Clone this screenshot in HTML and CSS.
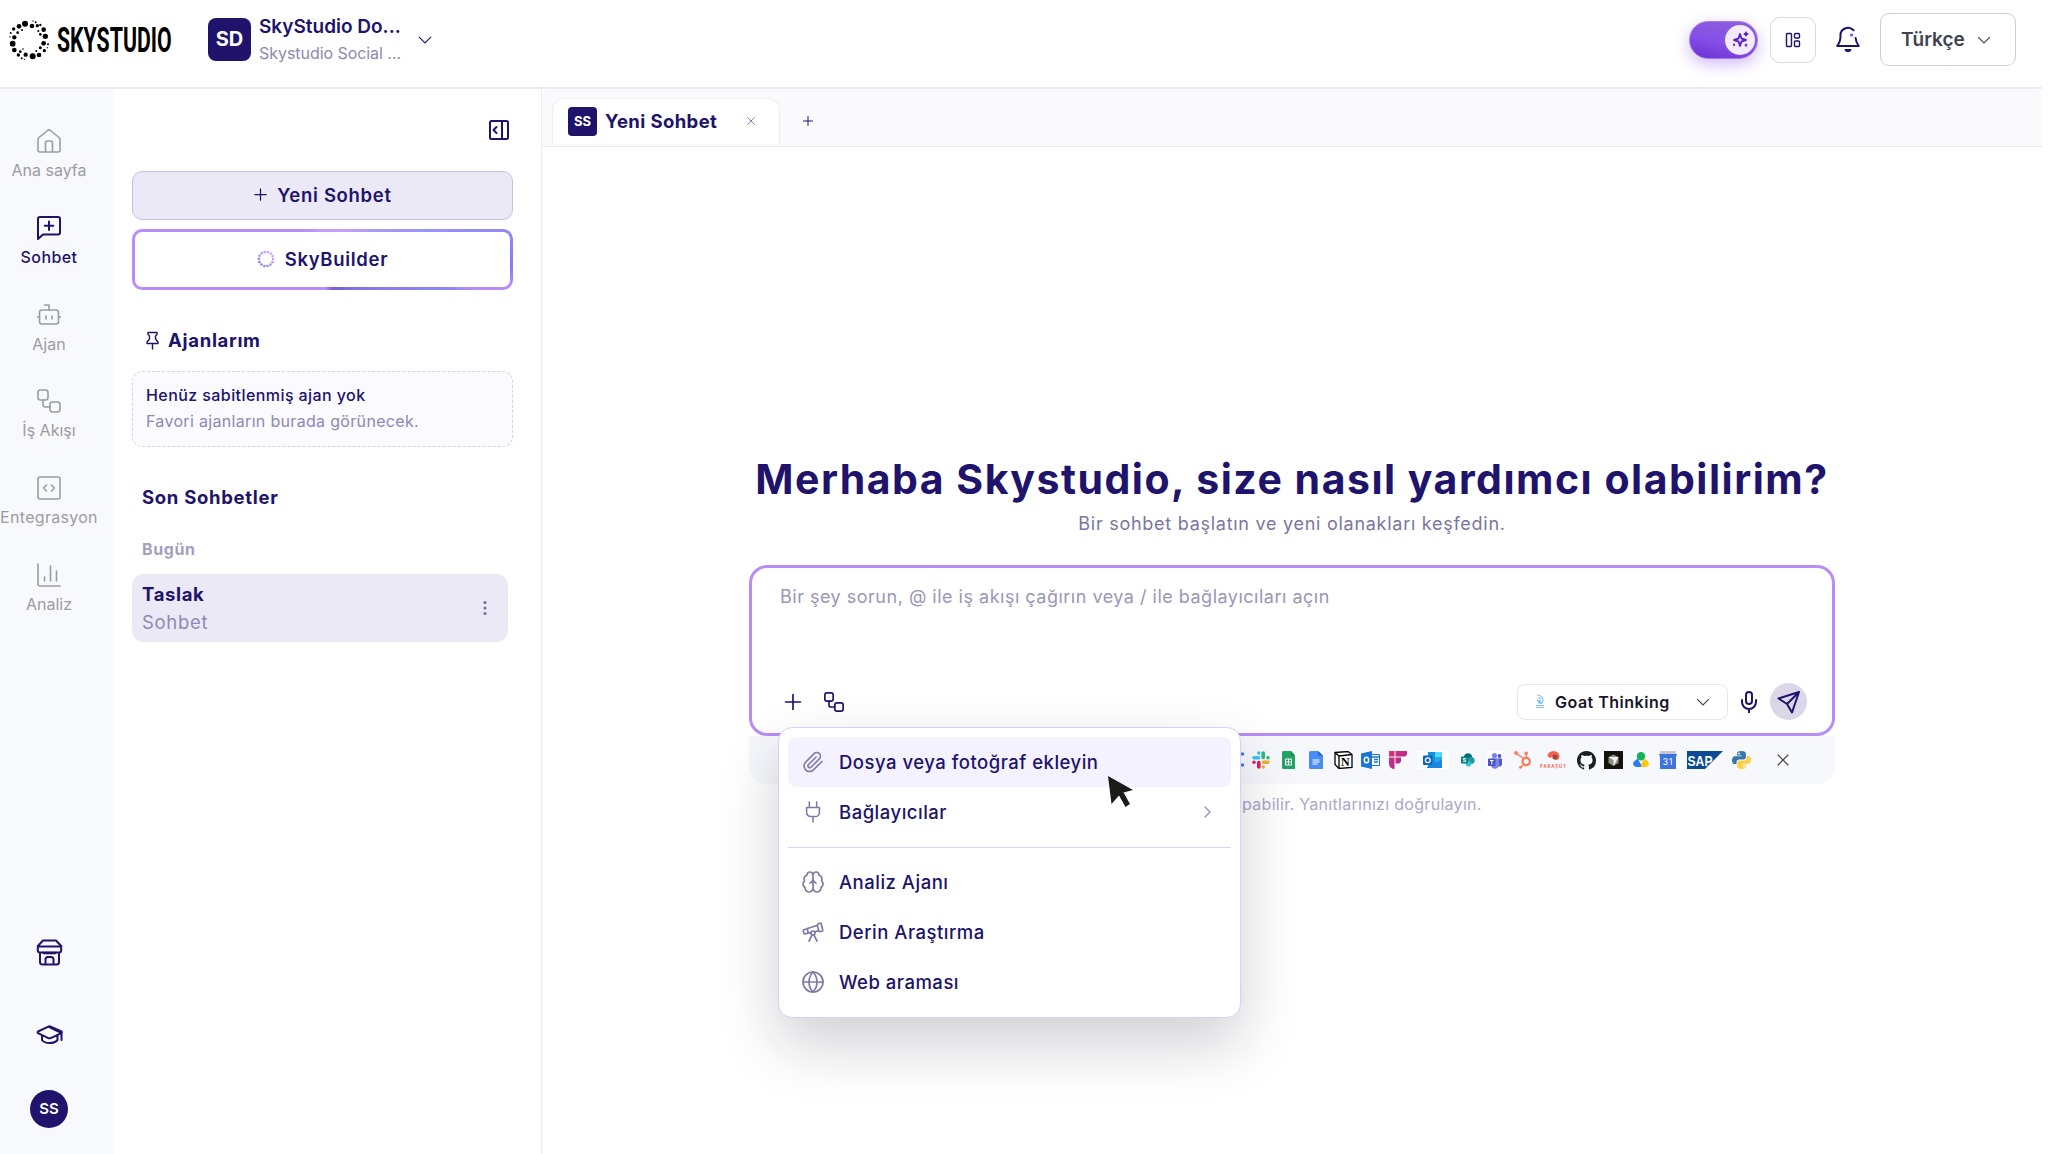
FILE: index.html
```html
<!DOCTYPE html>
<html lang="tr">
<head>
  <meta charset="UTF-8">
  <title>SkyStudio</title>
  <meta name="viewport" content="width=device-width, initial-scale=1.0">
  <link rel="stylesheet" href="styles.css">
</head>
<body>

  <!-- shared icons -->
  <svg class="sprite" width="0" height="0">
    <symbol id="i-plus" viewBox="0 0 24 24"><path d="M12 3v18M3 12h18"/></symbol>
    <symbol id="i-close" viewBox="0 0 24 24"><path d="M3 3l18 18M21 3L3 21"/></symbol>
    <symbol id="i-down" viewBox="0 0 24 24"><path d="M2 7l10 10L22 7"/></symbol>
    <symbol id="i-flow" viewBox="0 0 24 24"><rect x="1" y="1" width="10" height="10" rx="2.5"/><rect x="13" y="13" width="10" height="10" rx="2.5"/><path d="M6 11v4.500a2.500 2.500 0 0 0 2.500 2.500H13"/></symbol>
  </svg>

  <header class="topbar">
    <div class="logo">
      <svg width="42" height="42" viewBox="24 24 126 126">
        <circle cx="75" cy="38" r="9"/><circle cx="96" cy="45" r="7"/><circle cx="57" cy="46" r="7"/>
        <circle cx="41" cy="54" r="5"/><circle cx="112" cy="44" r="5"/><circle cx="121" cy="42" r="3.5"/>
        <circle cx="107" cy="34" r="3"/><circle cx="99" cy="30" r="2"/><circle cx="131" cy="56" r="7"/>
        <circle cx="136" cy="76" r="8"/><circle cx="121" cy="70" r="4"/><circle cx="115" cy="60" r="3"/>
        <circle cx="32" cy="66" r="3"/><circle cx="43" cy="79" r="6.500"/><circle cx="53" cy="65" r="4"/>
        <circle cx="30" cy="78" r="2"/><circle cx="66" cy="57" r="3"/><circle cx="38" cy="98" r="8.500"/>
        <circle cx="43" cy="117" r="7"/><circle cx="55" cy="132" r="5"/><circle cx="61" cy="122" r="4"/>
        <circle cx="69" cy="114" r="2.500"/><circle cx="77" cy="131" r="6.500"/><circle cx="98" cy="136" r="9"/>
        <circle cx="117" cy="132" r="7"/><circle cx="133" cy="119" r="5"/><circle cx="131" cy="97" r="7"/>
        <circle cx="121" cy="110" r="4.500"/><circle cx="144" cy="100" r="3"/><circle cx="142" cy="110" r="2"/>
        <circle cx="65" cy="142" r="3"/><circle cx="73" cy="145" r="2"/><circle cx="109" cy="120" r="3"/>
      </svg>
      <svg class="wordmark" width="116" height="30" viewBox="0 0 116 30">
        <text x="0" y="27" transform="scale(.6 1)" textLength="191" lengthAdjust="spacingAndGlyphs">SKYSTUDIO</text>
      </svg>
    </div>

    <div class="workspace">
      <div class="badge">SD</div>
      <div class="workspace-text">
        <div class="workspace-name">SkyStudio Do...</div>
        <div class="workspace-sub">Skystudio Social ...</div>
      </div>
      <svg class="icon" width="14" height="14"><use href="#i-down"/></svg>
    </div>

    <div class="actions">
      <div class="toggle">
        <div class="knob">
          <svg width="18" height="18" viewBox="0 0 24 24" fill="none" stroke="#5b21c9" stroke-width="2.500" stroke-linejoin="round" stroke-linecap="round"><path d="M12 4l2 6 6 2-6 2-2 6-2-6-6-2 6-2zM20 2v4M18 4h4M4 18v1"/><circle cx="20" cy="19" r=".6"/></svg>
        </div>
      </div>
      <button class="square">
        <svg class="icon" width="16" height="16" viewBox="0 0 16 16"><rect x="1.500" y="1.500" width="5" height="13" rx="1"/><rect x="9.500" y="1.500" width="5" height="4.500" rx="1"/><rect x="9.500" y="9" width="5" height="5.500" rx="1"/></svg>
      </button>
      <svg class="bell" width="24" height="28" viewBox="0 0 24 28"><path d="M17.500 4.300A7.500 7.500 0 0 0 4.500 10c0 5-1 7-3.300 10h21.600c-2-2.600-3-5-3.200-8" /><path d="M9.500 24a3 3 0 0 0 5 0z" fill="#20136b"/><circle cx="15.500" cy="9" r="1.600" fill="#7c4df0" stroke="none"/></svg>
      <button class="lang">Türkçe <svg width="14" height="14"><use href="#i-down"/></svg></button>
    </div>
  </header>

  <div class="app">
    <nav class="rail">
      <a class="rail-item">
        <svg width="24" height="24" viewBox="0 0 24 24"><path d="M1 10.500a3 3 0 0 1 1-2L10.500 1.500a2.300 2.300 0 0 1 3 0L22 8.500a3 3 0 0 1 1 2V21a2 2 0 0 1-2 2H3a2 2 0 0 1-2-2zM8.500 23v-9a2 2 0 0 1 2-2h3a2 2 0 0 1 2 2v9"/></svg>
        <span>Ana sayfa</span>
      </a>
      <a class="rail-item active">
        <svg width="24" height="24" viewBox="0 0 24 24"><path d="M1 23V3a2 2 0 0 1 2-2h18a2 2 0 0 1 2 2v13.500a2 2 0 0 1-2 2H6zM12 5.500v8.500M7.700 9.800h8.600"/></svg>
        <span>Sohbet</span>
      </a>
      <a class="rail-item">
        <svg width="24" height="24" viewBox="0 0 24 24"><rect x="2.500" y="7" width="19" height="14" rx="2.500"/><path d="M12 7V2H7.500M0 14h2.500M21.500 14H24M9 13v3M15 13v3"/></svg>
        <span>Ajan</span>
      </a>
      <a class="rail-item">
        <svg width="24" height="24"><use href="#i-flow"/></svg>
        <span>İş Akışı</span>
      </a>
      <a class="rail-item wide">
        <svg width="24" height="24" viewBox="0 0 24 24"><rect x="1" y="1" width="22" height="22" rx="2"/><path d="M9.500 9l-3 3 3 3M14.500 9l3 3-3 3"/></svg>
        <span>Entegrasyon</span>
      </a>
      <a class="rail-item">
        <svg width="24" height="24" viewBox="0 0 24 24"><path d="M1 1v20a2 2 0 0 0 2 2h20M7.500 14v4M13.500 3v15M19.500 8v10"/></svg>
        <span>Analiz</span>
      </a>

      <div class="rail-bottom">
        <svg width="27" height="27" viewBox="0 0 27 27"><path d="M7 1.500h13l5.200 5.500v4q0 2.500-2.200 2.500H4Q1.800 13.500 1.800 11V7zM2 7.500h23M4 13.500V23a2.500 2.500 0 0 0 2.500 2.500h14A2.500 2.500 0 0 0 23 23v-9.500M9.500 25v-4.500a2.500 2.500 0 0 1 2.500-2.500h3a2.500 2.500 0 0 1 2.500 2.500V25"/><path d="M7 13.500q1.500 2 3 0 1.700 2 3.500 0 1.700 2 3.500 0 1.500 2 3 0"/></svg>
        <svg width="27" height="20" viewBox="0 0 27 20"><path d="M12.300 1.600L2 6.500a1 1 0 0 0 0 1.600l10.300 5a3 3 0 0 0 2.400 0l10.800-5V15M25.500 8.100a1 1 0 0 0 0-1.600L14.700 1.600a3 3 0 0 0-2.400 0zM6 10.500V15c3 4 12 4 15.500 0v-4.500"/></svg>
        <div class="avatar">SS</div>
      </div>
    </nav>

    <aside class="sidebar">
      <svg class="icon collapse" width="20" height="20" viewBox="0 0 20 20"><rect x="1" y="1" width="18" height="18" rx="1.500"/><path d="M13 1v18M7.500 7l-3 3 3 3"/></svg>

      <button class="new-chat"><svg class="icon" width="15" height="15"><use href="#i-plus"/></svg>Yeni Sohbet</button>
      <button class="builder">
        <svg width="18" height="18" viewBox="0 0 18 18" fill="none" stroke-linecap="round">
          <defs><linearGradient id="ring" x1="1" y1="0" x2="0" y2="1"><stop offset="0" stop-color="#dcaaf8"/><stop offset="1" stop-color="#7a7cf0"/></linearGradient></defs>
          <circle cx="9" cy="9" r="7.200" stroke="url(#ring)" stroke-width="2.600" stroke-dasharray="0 3.230"/>
        </svg>
        SkyBuilder
      </button>

      <h2 class="pinned-title">
        <svg class="icon" width="13" height="19" viewBox="0 0 13 19"><path d="M2 1.500h9v2L9.500 5v3l2.500 3v1.500H1V11l2.500-3V5L2 3.500zM6.500 12.500v5.500"/></svg>
        Ajanlarım
      </h2>
      <div class="empty">
        <div class="empty-title">Henüz sabitlenmiş ajan yok</div>
        <div class="empty-text">Favori ajanların burada görünecek.</div>
      </div>

      <h2 class="recent-title">Son Sohbetler</h2>
      <div class="day">Bugün</div>
      <div class="chat-row">
        <div>
          <div class="chat-name">Taslak</div>
          <div class="chat-kind">Sohbet</div>
        </div>
        <svg width="4" height="16" viewBox="0 0 4 16" fill="#6f6a98"><circle cx="2" cy="2.500" r="1.500"/><circle cx="2" cy="8" r="1.500"/><circle cx="2" cy="13.500" r="1.500"/></svg>
      </div>
    </aside>

    <main class="main">
      <div class="tabs">
        <div class="tab">
          <div class="tab-badge">SS</div>
          <span class="tab-name">Yeni Sohbet</span>
          <svg width="10" height="10"><use href="#i-close"/></svg>
        </div>
        <svg class="icon" width="12" height="12"><use href="#i-plus"/></svg>
      </div>

      <section class="hero">
        <h1>Merhaba Skystudio, size nasıl yardımcı olabilirim?</h1>
        <p class="lead">Bir sohbet başlatın ve yeni olanakları keşfedin.</p>

        <div class="composer-wrap">
          <div class="composer">
            <div class="placeholder">Bir şey sorun, @ ile iş akışı çağırın veya / ile bağlayıcıları açın</div>
            <div class="tools">
              <svg class="icon" width="20" height="20"><use href="#i-plus"/></svg>
              <svg class="icon flow" width="20" height="20"><use href="#i-flow"/></svg>
              <div class="model">
                <svg width="10" height="15" viewBox="0 0 10 15" fill="none" stroke="#7fc0ec" stroke-width="1.200"><path d="M2 1c3 0 6 2 6 5s-2 4-4 3 0-3 2-2M3 3.500l3 1.500M2 6l3 2M3 8.500h5M1 11.500h8M1 13.500h8" /></svg>
                <span>Goat Thinking</span>
                <svg class="model-arrow" width="14" height="14"><use href="#i-down"/></svg>
              </div>
              <svg class="icon mic" width="16" height="22" viewBox="0 0 16 22"><rect x="5" y="1" width="6" height="12" rx="3"/><path d="M1 9v2a7 7 0 0 0 14 0V9M8 18v3.500"/></svg>
              <div class="send">
                <svg class="icon" width="24" height="24" viewBox="0 0 24 24"><path d="M22 2L1.500 8.500l8.500 5.500 5 8.500zM22 2L10 14"/></svg>
              </div>
            </div>
          </div>

          <div class="connectors">
            <svg class="cut" width="6" height="18" viewBox="0 0 6 18" fill="#3b7df0"><circle cx="2.500" cy="3" r="1.800"/><circle cx="2.500" cy="14" r="1.800"/></svg>
            <svg class="slack" width="18" height="18" viewBox="0 0 18 18" stroke-width="3.600" stroke-linecap="round"><path d="M2 6.800h4.500M6.800 2v0" stroke="#36c5f0"/><path d="M11.200 2v4.500M16 6.800h0" stroke="#2eb67d"/><path d="M11.500 11.200H16M11.200 16v0" stroke="#ecb22e"/><path d="M6.800 11.500V16M2 11.200h0" stroke="#e01e5a"/></svg>
            <svg class="sheets" width="14" height="18" viewBox="0 0 14 18"><path d="M1.500 0H9l4 4.500V18H1.500Q0 18 0 16.500v-15Q0 0 1.500 0z" fill="#22a464"/><path d="M9 0l4 4.500H9z" fill="#168a50"/><path d="M3.500 8h6v6h-6zM3.500 11h6M6.500 8v6" fill="none" stroke="#fff"/></svg>
            <svg class="docs" width="14" height="18" viewBox="0 0 14 18"><path d="M1.500 0H9l5 4.500V18H1.500Q0 18 0 16.500v-15Q0 0 1.500 0z" fill="#4a8cf5"/><path d="M9 0l5 4.500H9z" fill="#2b67cd"/><path d="M3.500 9h7M3.500 11h7M3.500 13h5" stroke="#fff"/></svg>
            <svg class="notion" width="19" height="18" viewBox="0 0 19 18"><path d="M1 1.500L14 .5l4 3V16.500l-13 1-4-4z" fill="#fff" stroke="#000" stroke-width="1.300"/><path d="M1 1.500l4 3.500 13-1.500M5 5v12.500" fill="none" stroke="#000" stroke-width="1.300"/><text x="7" y="15.200" font-family="Liberation Serif" font-weight="700" font-size="12">N</text></svg>
            <svg class="outlook" width="19" height="18" viewBox="0 0 19 18"><path d="M10 3.500h8.500v11H10z" fill="#fff" stroke="#1976d2"/><path d="M10 6h8M13 8.500h4M13 11h4" stroke="#1976d2" stroke-width="1.500"/><path d="M0 2.500L11 0v18L0 15.500z" fill="#1976d2"/><ellipse cx="5.500" cy="9" rx="2.200" ry="2.800" fill="none" stroke="#fff" stroke-width="1.500"/></svg>
            <svg class="fire" width="18" height="18" viewBox="0 0 18 18"><defs><linearGradient id="ff" x1="0" y1="0" x2="1" y2="1"><stop offset="0" stop-color="#e5307c"/><stop offset="1" stop-color="#8a2a94"/></linearGradient></defs><path d="M0 0h5.500v5.500H0zM6.500 0H18v2.500a3 3 0 0 1-3 3H6.500zM0 6.500h5.500V18A5.500 5.500 0 0 1 0 12.500zM6.500 6.500H12v3a3 3 0 0 1-3 3H6.500z" fill="url(#ff)"/></svg>
            <svg class="outlook2" width="32" height="18" viewBox="0 0 32 18"><path d="M0 0h32v18H0z" fill="#fff"/><path d="M11 1h14v15H11z" fill="#1490df"/><path d="M18 1h7v5h-7z" fill="#50d9ff"/><path d="M18 6h7v5h-7z" fill="#28a8ea"/><path d="M10 16l15-7v8H10z" fill="#1a86dc"/><rect x="6" y="4.500" width="9.500" height="9.500" rx="1" fill="#0a64c0"/><circle cx="10.800" cy="9.200" r="2.400" fill="none" stroke="#fff" stroke-width="1.300"/></svg>
            <svg class="share" width="14" height="14" viewBox="0 0 14 14"><circle cx="7" cy="4.500" r="4.200" fill="#036c70"/><circle cx="10.200" cy="7.500" r="3.500" fill="#1a9ba1"/><circle cx="7.500" cy="10.800" r="2.800" fill="#37c6d0"/><rect y="3.500" width="7" height="7" rx=".7" fill="#038387"/><text x="1.600" y="9.300" font-family="Roboto" font-weight="700" font-size="6" fill="#fff">S</text></svg>
            <svg class="teams" width="16" height="18" viewBox="0 0 16 18"><path d="M0 0h16v18H0z" fill="#fff"/><circle cx="7.500" cy="4.500" r="2.600" fill="#7b83eb"/><circle cx="12.500" cy="5" r="1.900" fill="#5059c9"/><path d="M9 7.500h6V13a2.500 2.500 0 0 1-3 2.500H9z" fill="#5059c9"/><path d="M4 7.500h8V12a4 4 0 0 1-8 3z" fill="#7b83eb"/><rect x="1" y="7.500" width="7.500" height="7.500" rx=".7" fill="#4b53bc"/><path d="M3 9.500h3.500M4.800 9.500v4" stroke="#fff"/></svg>
            <svg class="hubspot" width="18" height="18" viewBox="0 0 18 18" fill="none" stroke="#ff7a59"><circle cx="12.200" cy="10.500" r="3.700" stroke-width="2.200"/><path d="M12.200 6.500V3M9.500 7.500L2.500 2.300M9.500 13.300l-2.700 2.900" stroke-width="1.500"/><g fill="#ff7a59" stroke="none"><circle cx="12.200" cy="2.200" r="1.800"/><circle cx="2" cy="2" r="1.900"/><circle cx="6.500" cy="16.300" r="1.500"/></g></svg>
            <svg class="parasut" width="27" height="18" viewBox="0 0 27 18"><path d="M7.500 5.500a6 5.500 0 0 1 12 0c0 2-1.500 3.500-4 3.500V7a3 3 0 0 0-5 0z" fill="#f9604f"/><circle cx="15" cy="6" r="2.600" fill="#9c4a44"/><text x="0" y="17.200" textLength="26" font-family="Inter" font-weight="700" font-size="4.200" fill="#f9604f">PARAŞÜT</text></svg>
            <svg class="github" width="19" height="19" viewBox="0 0 16 16"><path fill="#1b1f23" d="M8 0C3.580 0 0 3.580 0 8c0 3.540 2.290 6.530 5.470 7.590.4.070.55-.17.550-.38v-1.330c-2.230.48-2.700-1.070-2.700-1.070-.36-.92-.89-1.170-.89-1.170-.73-.5.050-.49.050-.49.810.06 1.230.83 1.230.83.720 1.230 1.880.87 2.340.67.070-.52.280-.87.510-1.070-1.780-.2-3.640-.89-3.640-3.950 0-.87.310-1.590.82-2.150-.08-.2-.36-1.020.08-2.120 0 0 .67-.21 2.200.82a7.600 7.600 0 0 1 4 0c1.530-1.040 2.200-.82 2.200-.82.440 1.100.16 1.920.08 2.120.51.56.82 1.270.82 2.150 0 3.070-1.870 3.750-3.650 3.950.29.25.54.73.54 1.480v2.200c0 .21.150.46.550.38A8 8 0 0 0 16 8c0-4.420-3.580-8-8-8z"/></svg>
            <svg class="cursor-app" width="19" height="18" viewBox="0 0 19 18"><path d="M0 0h19v18H0z" fill="#14120b"/><path d="M9.500 3.500L14.500 6v6l-5 3-5-3V6z" fill="#8d8d8b"/><path d="M4.500 6h10l-5 9V9z" fill="#f2f2f0"/></svg>
            <svg class="gads" width="16" height="16" viewBox="0 0 16 16"><circle cx="8" cy="4.200" r="4.200" fill="#12b35a"/><path d="M4.500 6.500L8 12.500V15H3.500a3.400 3.400 0 0 1-3-5z" fill="#2b7cf0"/><path d="M11.500 6.500L8 12.500V15h4.500a3.400 3.400 0 0 0 3-5z" fill="#fbc70f"/></svg>
            <svg class="gcal" width="18" height="18" viewBox="0 0 18 18"><path d="M1.500 0h15l.8 4H.7z" fill="#c3c6cc"/><path d="M0 3h18l-1 3v12H1V6z" fill="#3d73dd"/><text x="3.800" y="14.300" font-family="Roboto" font-size="9.500" fill="#fff">31</text></svg>
            <svg class="sap" width="36" height="18" viewBox="0 0 36 18"><path d="M0 0h36L18 18H0z" fill="#0b4a94"/><text x=".5" y="14.500" textLength="25" lengthAdjust="spacingAndGlyphs" font-family="Liberation Sans" font-weight="700" font-size="15.500" fill="#fff">SAP</text></svg>
            <svg class="python" width="19" height="18" viewBox="0 0 19 18"><path d="M9.300 0C6 0 5 1 5 2.700V4.500h4.700V5.300H3C1 5.300 0 7 0 9.300s1 3.800 2.600 3.800H4.500V11c0-1.500 1.300-2.500 2.600-2.500h4.600c1.300 0 2.200-1 2.200-2.200V2.700C13.900 1 12.500 0 9.300 0z" fill="#3776a6"/><path d="M9.700 18c3.300 0 4.300-1 4.300-2.700v-1.800H9.300v-.8H16c2 0 3-1.700 3-4s-1-3.800-2.600-3.800h-1.600v2.200c0 1.500-1.300 2.500-2.600 2.500H7.500c-1.300 0-2.200 1-2.200 2.200v3.500C5.300 17 6.500 18 9.700 18z" fill="#fdd043"/><circle cx="7" cy="2.500" r=".9" fill="#fff"/><circle cx="12" cy="15.500" r=".9" fill="#fff"/></svg>
            <svg class="dismiss" width="14" height="14"><use href="#i-close"/></svg>
          </div>

          <div class="menu">
            <div class="menu-item hover">
              <svg width="22" height="22" viewBox="0 0 24 24"><path d="M21.400 11.100l-9.200 9.200a6 6 0 0 1-8.500-8.500l9.200-9.200a4 4 0 0 1 5.700 5.700l-9.200 9.200a2 2 0 0 1-2.800-2.800l8.500-8.500" transform="translate(.3 .3)"/></svg>
              <span>Dosya veya fotoğraf ekleyin</span>
            </div>
            <div class="menu-item">
              <svg width="22" height="22" viewBox="0 0 24 24"><path d="M12 23v-6M8 7V1M16 7V1M5 7h14v5.500a4.500 4.500 0 0 1-4.500 4.500h-5A4.500 4.500 0 0 1 5 12.500z"/></svg>
              <span>Bağlayıcılar</span>
              <svg class="more" width="10" height="14" viewBox="0 0 10 14"><path d="M2 2l5 5-5 5"/></svg>
            </div>
            <hr>
            <div class="menu-item">
              <svg width="24" height="24" viewBox="0 0 24 24"><path d="M12 5a3 3 0 1 0-5.997.125 4 4 0 0 0-2.526 5.770 4 4 0 0 0 .556 6.588A4 4 0 1 0 12 18zM12 5a3 3 0 1 1 5.997.125 4 4 0 0 1 2.526 5.770 4 4 0 0 1-.556 6.588A4 4 0 1 1 12 18M15 13a4.500 4.500 0 0 1-3-4 4.500 4.500 0 0 1-3 4"/></svg>
              <span>Analiz Ajanı</span>
            </div>
            <div class="menu-item">
              <svg width="24" height="24" viewBox="0 0 24 24"><path d="M10.065 12.493l-6.180 1.318a.934.934 0 0 1-1.108-.702l-.537-2.150a1.070 1.070 0 0 1 .691-1.265l13.504-4.440M13.560 11.747l4.332-.924M16 21l-3.105-6.210M16.485 5.940a2 2 0 0 1 1.455-2.425l1.090-.272a1 1 0 0 1 1.212.727l1.515 6.060a1 1 0 0 1-.727 1.213l-1.090.272a2 2 0 0 1-2.425-1.455zM6.158 8.633l1.114 4.456M8 21l3.105-6.210"/><circle cx="12" cy="13" r="2"/></svg>
              <span>Derin Araştırma</span>
            </div>
            <div class="menu-item">
              <svg width="24" height="24" viewBox="0 0 24 24"><circle cx="12" cy="12" r="10"/><path d="M12 2a14.500 14.500 0 0 0 0 20 14.500 14.500 0 0 0 0-20M2 12h20"/></svg>
              <span>Web araması</span>
            </div>
            <svg class="pointer" width="26" height="32" viewBox="0 0 26 32"><path d="M0 0l25 14-9.500 2.500L22 28l-4.500 3-6.500-11.500L3.500 28z"/></svg>
          </div>
        </div>

        <p class="note">pabilir. Yanıtlarınızı doğrulayın.</p>
      </section>
    </main>
  </div>

</body>
</html>
```

FILE: styles.css
```css
* {
  box-sizing: border-box;
}

body {
  margin: 0;
  width: 2042px;
  height: 1154px;
  overflow: hidden;
  background: #ffffff;
  color: #20136b;
  font-family: Inter, 'Noto Sans', sans-serif;
}

svg {
  display: block;
  flex: none;
}

.sprite {
  position: absolute;
}

button {
  font-family: inherit;
  color: inherit;
  padding: 0;
}

h1, h2, p {
  margin: 0;
}

.icon, .bell {
  fill: none;
  stroke: #20136b;
  stroke-width: 2;
  stroke-linecap: round;
  stroke-linejoin: round;
}

/* top bar */
.topbar {
  display: flex;
  align-items: center;
  height: 89px;
  padding: 0 26px 8px 8px;
  border-bottom: 2px solid #ebeaf5;
}

.logo {
  display: flex;
  align-items: center;
  gap: 7px;
  width: 200px;
}

.wordmark {
  overflow: visible;
}

.wordmark text {
  font-family: Roboto, sans-serif;
  font-weight: 700;
  font-size: 35px;
}

.workspace {
  display: flex;
  align-items: center;
}

.badge {
  width: 43px;
  height: 43px;
  border-radius: 8px;
  background: #20136b;
  color: #fff;
  font-size: 20px;
  font-weight: 700;
  line-height: 43px;
  text-align: center;
}

.workspace-text {
  width: 167px;
  padding-left: 8px;
  white-space: nowrap;
}

.workspace-name {
  font-size: 19px;
  font-weight: 600;
  line-height: 27px;
}

.workspace-sub {
  font-size: 16px;
  line-height: 27px;
  letter-spacing: -0.05px;
  color: #8d89ad;
}

.actions {
  display: flex;
  align-items: center;
  margin-left: auto;
}

.toggle {
  display: flex;
  justify-content: flex-end;
  align-items: center;
  width: 69px;
  height: 38px;
  margin-right: 12px;
  padding-right: 2px;
  border-radius: 19px;
  border: 1px solid #a57de8;
  background: linear-gradient(15deg, #6a2fd0, #8550e8 45%, #8d62d8);
  box-shadow: 0 5px 16px rgba(140, 80, 240, 0.4);
}

.knob {
  display: flex;
  align-items: center;
  justify-content: center;
  width: 30px;
  height: 30px;
  border-radius: 50%;
  background: #f3eafd;
}

.square {
  display: flex;
  align-items: center;
  justify-content: center;
  width: 46px;
  height: 46px;
  border: 1.5px solid #d9d9dc;
  border-radius: 10px;
  background: #fff;
}

.square .icon {
  stroke-width: 1.4;
}

.bell {
  margin: 0 20px 0 20px;
}

.lang {
  display: flex;
  align-items: center;
  justify-content: space-between;
  width: 136px;
  height: 53px;
  padding: 0 24px 0 20px;
  border: 1.5px solid #cbd0db;
  border-radius: 9px;
  background: #fff;
  color: #3f4350;
  font-size: 19px;
  font-weight: 600;
}

.lang svg, .model-arrow, .dismiss {
  fill: none;
  stroke: #3f4350;
  stroke-width: 2;
}

/* layout */
.app {
  display: flex;
  height: 1065px;
}

.rail {
  display: flex;
  flex-direction: column;
  width: 113px;
  padding: 40px 15px 0 0;
  background: #f8f9fd;
}

.rail-item {
  display: flex;
  flex-direction: column;
  align-items: center;
  height: 86.8px;
  color: #9c9ba3;
  font-size: 16px;
  line-height: 20px;
  white-space: nowrap;
}

.rail-item span {
  margin-top: 7px;
}

.rail-item.wide {
  letter-spacing: 0.3px;
}

.rail svg {
  fill: none;
  stroke: currentColor;
  stroke-width: 1.6;
  stroke-linecap: round;
  stroke-linejoin: round;
}

.rail-item.active {
  color: #20136b;
  font-weight: 500;
  letter-spacing: 0.4px;
}

.rail-item.active svg {
  stroke-width: 2;
}

.rail-bottom {
  display: flex;
  flex-direction: column;
  align-items: center;
  margin-top: auto;
  padding-bottom: 26px;
}

.rail-bottom svg {
  margin-bottom: 59px;
  stroke-width: 2;
}

.rail-bottom svg + svg {
  margin-bottom: 45px;
}

.avatar {
  width: 38px;
  height: 38px;
  border-radius: 50%;
  background: #20136b;
  color: #fff;
  font-size: 15px;
  font-weight: 600;
  line-height: 38px;
  text-align: center;
}

.sidebar {
  width: 429px;
  padding: 31px 28px 0 19px;
  border-right: 1.5px solid #ebeaf5;
}

.collapse {
  margin: 0 4px 31px auto;
}

.new-chat, .builder {
  display: flex;
  align-items: center;
  justify-content: center;
  width: 381px;
  border-radius: 10px;
  font-size: 18.5px;
  font-weight: 600;
  letter-spacing: 0.7px;
}

.new-chat {
  gap: 9px;
  height: 49px;
  padding-bottom: 2px;
  border: 1.5px solid #c5c3e4;
  background: #eae9f5;
}

.builder {
  gap: 10px;
  height: 61px;
  margin-top: 9px;
  padding-bottom: 1px;
  border: 3px solid transparent;
  background:
    linear-gradient(#fff, #fff) padding-box,
    conic-gradient(from 0deg at 50% 50%, #c99bf6 0deg, #c9a0f6 40deg, #9a93fa 74deg, #7f7cf8 92deg, #b98df8 98deg, #b98df8 101deg, #8a84fa 103deg, #7a5ad8 160deg, #b98df8 176deg, #b98df8 330deg, #c99bf6 360deg) border-box;
}

.pinned-title, .recent-title {
  font-size: 18.5px;
  font-weight: 700;
  line-height: 24px;
  letter-spacing: 0.7px;
}

.pinned-title {
  display: flex;
  align-items: center;
  gap: 9px;
  margin: 38px 0 19px 14px;
}

.pinned-title .icon {
  stroke-width: 1.4;
}

.empty {
  width: 381px;
  height: 76px;
  padding: 10px 13px;
  border: 1.5px dashed #d5d1e8;
  border-radius: 10px;
  background: #fafaff;
  line-height: 26px;
  white-space: nowrap;
}

.empty-title {
  font-size: 16px;
  font-weight: 500;
  letter-spacing: 0.42px;
}

.empty-text {
  font-size: 16px;
  letter-spacing: 0.32px;
  color: #8d89b3;
}

.recent-title {
  margin: 38px 0 0 10px;
}

.day {
  margin: 28px 0 13px 10px;
  font-size: 16px;
  font-weight: 700;
  line-height: 24px;
  letter-spacing: 0.6px;
  color: #a39fbf;
}

.chat-row {
  display: flex;
  align-items: center;
  justify-content: space-between;
  width: 376px;
  height: 68px;
  padding: 0 21px 0 10px;
  border-radius: 12px;
  background: #eae9f5;
  line-height: 28px;
}

.chat-name {
  font-size: 18.5px;
  font-weight: 700;
  letter-spacing: 0.65px;
}

.chat-kind {
  font-size: 18.5px;
  letter-spacing: 0.7px;
  color: #8d89b3;
}

/* tabs */
.main {
  width: 1500px;
}

.tabs {
  display: flex;
  align-items: center;
  height: 58px;
  padding: 6px 0 0 10px;
  border-bottom: 1.5px solid #e8e7f3;
  border-radius: 8px 8px 0 0;
  background: #fafafc;
}

.tab {
  display: flex;
  align-items: center;
  width: 228px;
  height: 46px;
  margin-right: 22px;
  padding: 0 23px 0 15px;
  border: 1.5px solid #ecebf6;
  border-bottom: 0;
  border-radius: 12px 12px 0 0;
  background: #fff;
}

.tab-badge {
  width: 29px;
  height: 29px;
  margin-right: 8px;
  border-radius: 4px;
  background: #20136b;
  color: #fff;
  font-size: 13px;
  font-weight: 700;
  line-height: 29px;
  text-align: center;
}

.tab-name {
  font-size: 18.5px;
  font-weight: 700;
  letter-spacing: 0.4px;
}

.tab > svg {
  margin-left: auto;
  stroke: #8483d4;
  stroke-width: 2.4;
}

/* hero */
.hero {
  width: 1086px;
  margin: 305px 0 0 207px;
}

h1 {
  font-size: 41px;
  font-weight: 700;
  line-height: 54px;
  letter-spacing: 1.5px;
  text-align: center;
  white-space: nowrap;
}

.lead {
  margin-top: 5px;
  font-size: 18px;
  line-height: 26px;
  letter-spacing: 0.73px;
  text-align: center;
  color: #7a769f;
}

.composer-wrap {
  position: relative;
  margin-top: 28px;
}

.composer {
  display: flex;
  flex-direction: column;
  height: 171px;
  padding: 16px 25px 13px 28px;
  border: 3px solid #b98df5;
  border-radius: 18px;
  background: #fff;
}

.placeholder {
  font-size: 18px;
  line-height: 26px;
  letter-spacing: 0.5px;
  color: #9a96b8;
}

.tools {
  display: flex;
  align-items: center;
  height: 37px;
  margin-top: auto;
  padding-left: 3px;
}

.tools .flow {
  margin-left: 21px;
}

.model {
  display: flex;
  align-items: center;
  width: 211px;
  height: 36px;
  margin-left: auto;
  padding: 0 17px;
  border: 1.5px solid #e6e6ea;
  border-radius: 8px;
  color: #181528;
  font-size: 16px;
  font-weight: 600;
  letter-spacing: 0.5px;
}

.model span {
  margin-left: 10px;
}

.model-arrow {
  margin-left: auto;
}

.mic {
  margin: 0 13px;
}

.send {
  display: flex;
  align-items: center;
  justify-content: center;
  width: 37px;
  height: 37px;
  border-radius: 50%;
  background: #dcd7e8;
}

/* connector strip, icons packed to the right */
.connectors {
  display: flex;
  align-items: center;
  justify-content: flex-end;
  height: 48px;
  padding-right: 45px;
  border-radius: 0 0 18px 18px;
  background: #f7f8fc;
}

.cut { margin-right: 6px; }
.slack { margin-right: 12px; }
.sheets { margin-right: 13px; }
.docs { margin-right: 11px; }
.notion { margin-right: 8px; }
.outlook { margin-right: 9px; }
.fire { margin-right: 10px; }
.outlook2 { margin-right: 12px; }
.share { margin-right: 12px; }
.teams { margin-right: 11px; }
.hubspot { margin-right: 8px; }
.parasut { margin-right: 10px; }
.github { margin-right: 8px; }
.cursor-app { margin-right: 10px; }
.gads { margin-right: 10px; }
.gcal { margin-right: 10px; }
.sap { margin-right: 9px; }
.python { margin-right: 25px; }

.note {
  margin: 7px 0 0 493px;
  font-size: 16px;
  line-height: 26px;
  letter-spacing: 0.3px;
  white-space: nowrap;
  color: #aba7c8;
}

/* attach menu */
.menu {
  position: absolute;
  top: 162px;
  left: 29px;
  width: 463px;
  height: 291px;
  padding: 9px;
  border: 1.5px solid #d9cffa;
  border-radius: 14px;
  background: #fff;
  box-shadow: 0 26px 60px rgba(20, 20, 40, 0.2);
}

.menu-item {
  display: flex;
  align-items: center;
  height: 50px;
  padding: 0 18px 0 13px;
  border-radius: 8px;
  font-size: 18.5px;
  font-weight: 500;
  letter-spacing: 0.5px;
}

.menu-item.hover {
  background: #f4f2fe;
}

.menu-item svg {
  width: 24px;
  fill: none;
  stroke: #7f7aa3;
  stroke-width: 1.7;
  stroke-linecap: round;
  stroke-linejoin: round;
}

.menu-item span {
  margin-left: 14px;
}

.menu-item .more {
  width: 10px;
  margin-left: auto;
  stroke: #a39fc4;
}

.menu hr {
  height: 1px;
  margin: 10px 0 9px;
  border: 0;
  background: #d9d4f0;
}

.pointer {
  position: absolute;
  top: 48px;
  left: 329px;
  fill: #1c1b1a;
}
```
